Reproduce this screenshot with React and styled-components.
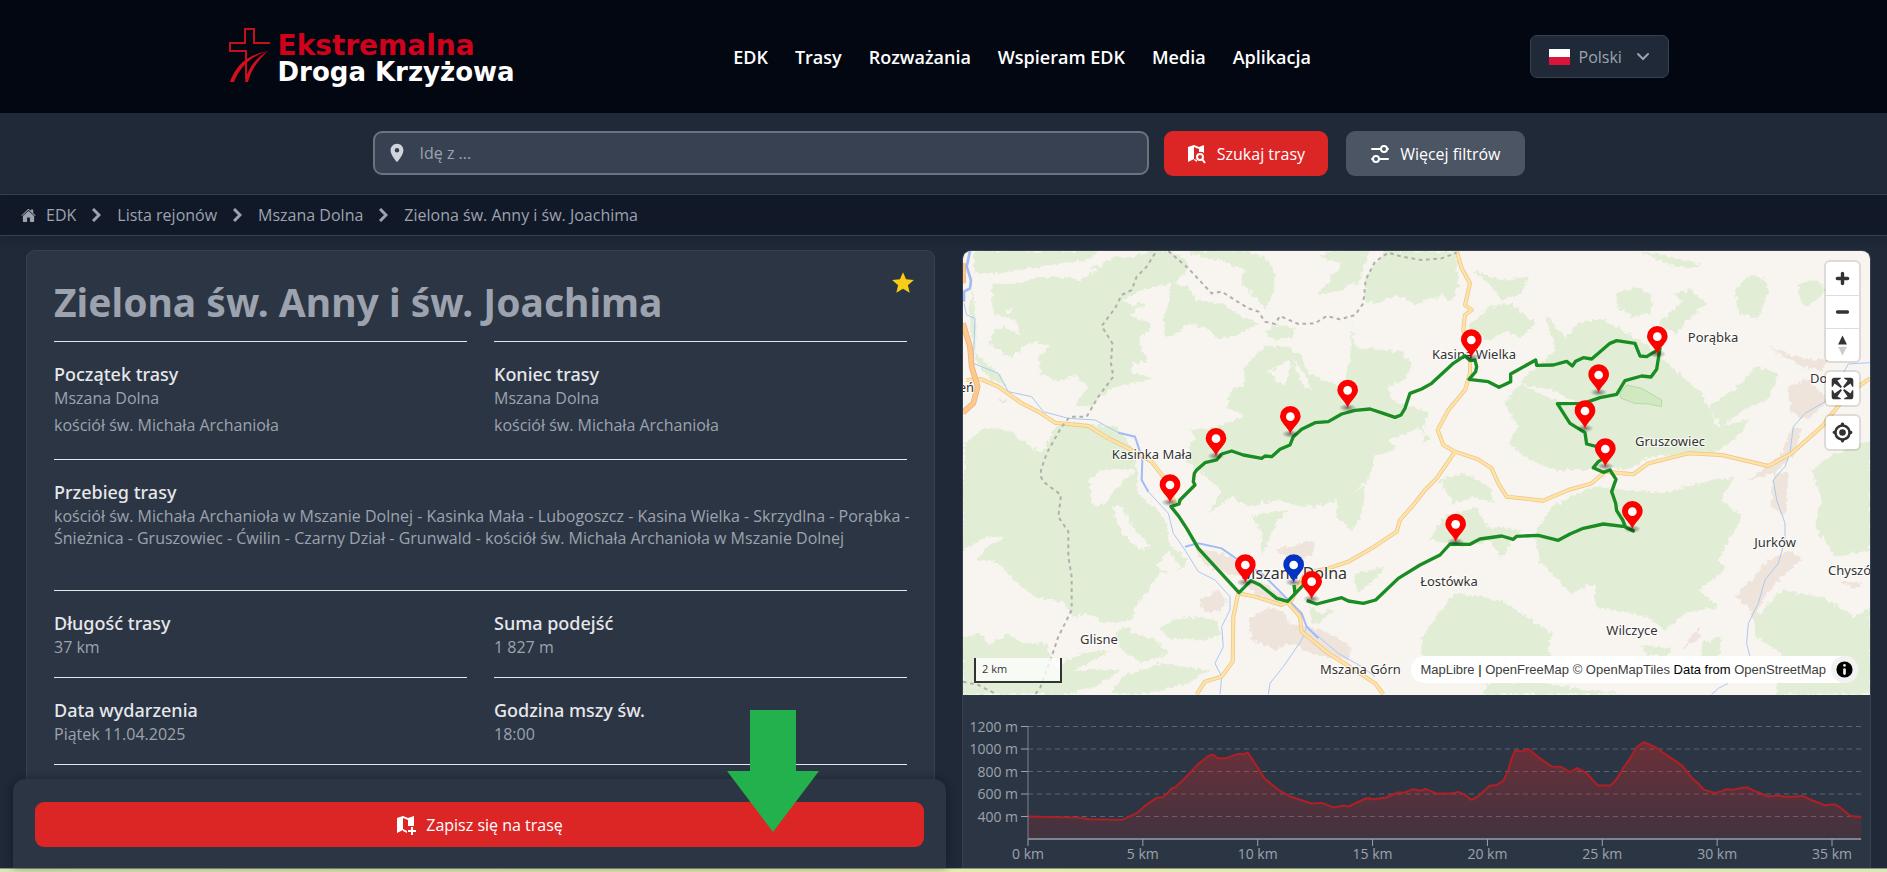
import React from 'react';
import styled, { createGlobalStyle, css } from 'styled-components';
import { MdLocationOn, MdStar } from 'react-icons/md';
import { IoHome } from 'react-icons/io5';

const navLinks = ['EDK', 'Trasy', 'Rozważania', 'Wspieram EDK', 'Media', 'Aplikacja'];

const crumbs = ['EDK', 'Lista rejonów', 'Mszana Dolna', 'Zielona św. Anny i św. Joachima'];

const church = 'kościół św. Michała Archanioła';

const places = [
  { name: 'eń', x: 11, y: 141, anchor: 'end' },
  { name: 'Kasinka Mała', x: 189, y: 208 },
  { name: 'Kasina Wielka', x: 511, y: 108 },
  { name: 'Porąbka', x: 750, y: 91 },
  { name: 'Do', x: 847, y: 132, anchor: 'start' },
  { name: 'Gruszowiec', x: 707, y: 195 },
  { name: 'Mszana Dolna', x: 331, y: 328, town: true },
  { name: 'Glisne', x: 136, y: 393 },
  { name: 'Łostówka', x: 486, y: 335 },
  { name: 'Wilczyce', x: 669, y: 384 },
  { name: 'Jurków', x: 812, y: 296 },
  { name: 'Chyszó', x: 865, y: 324, anchor: 'start' },
  { name: 'Mszana Górn', x: 357, y: 423, anchor: 'start' },
];

// pin tips, in terrain units (3 per pixel)
const pins = [
  [1178, 503],
  [1006, 582],
  [783, 648],
  [1549, 352],
  [2107, 342],
  [1931, 457],
  [1890, 565],
  [1951, 679],
  [645, 787],
  [871, 1027],
  [1016, 1027, '#0433c4'],
  [1070, 1077],
  [1502, 905],
  [2032, 867],
];

const forests = [
  'M55 33H430L400 60 330 68 240 82 160 95 110 100 60 100Z',
  'M112 135L195 130 245 112 345 112 375 125 385 85 440 75 470 55 530 50 590 33H640L700 60 690 100 655 130 600 140 560 150 535 165 500 180 530 195 575 190 520 225 590 250 580 280 550 290 560 330 580 365 530 370 530 400 598 415 530 430 465 445 410 500 360 495 400 440 365 405 310 425 255 400 250 350 285 320 240 305 200 320 165 355 105 310 115 270 150 260 200 290 185 245 125 225 112 200Z',
  'M40 200L55 150 60 230 62 340 120 390 160 440 110 420 66 370Z',
  'M650 130L700 140 720 180 800 190 870 235 910 250 840 290 790 295 760 265 700 250 650 290 630 285 625 230 640 190Z',
  'M690 33H880L940 60 960 110 955 160 930 205 860 130 870 90 790 60 720 45Z',
  'M1090 165L1160 70 1090 50 1130 33H1240L1215 120 1160 150Z',
  'M1230 185L1235 110 1260 70 1290 33H1500L1505 60 1510 140 1490 185 1460 165 1380 195 1330 165 1270 190Z',
  'M930 280L960 255 1020 260 1015 290 960 300Z',
  'M690 660L720 590 700 570 790 560 870 525 815 505 830 450 870 430 865 385 930 320 990 320 1035 340 1060 400 1110 420 1165 440 1185 360 1192 250 1200 320 1340 335 1370 370 1350 420 1300 440 1310 480 1400 510 1410 580 1340 620 1260 650 1240 720 1190 760 1110 795 1040 800 960 780 880 800 830 770 760 820 800 750 730 690Z',
  'M30 610L90 560 170 575 200 600 260 640 300 560 340 545 480 560 520 600 550 700 545 760 600 800 630 840 640 900 660 930 700 960 680 990 610 1000 580 1050 540 1100 530 1140 450 1150 400 1120 350 1130 330 1090 240 1070 200 1040 170 1010 130 970 60 960 100 920 150 890 80 890 30 930Z',
  'M24 700L90 690 200 760 190 850 120 880 24 930Z',
  'M24 1190L80 1180 100 1215 160 1180 200 1210 270 1210 300 1280 380 1240 470 1230 360 1290 500 1290 420 1340 340 1363 24 1363Z',
  'M480 1180L510 1160 540 1180 600 1200 640 1240 560 1270 500 1230Z',
  'M615 1160L680 1130 780 1135 800 1180 760 1200 640 1195Z',
  'M500 1310L620 1270 760 1290 700 1330 560 1363 470 1363Z',
  'M890 830L930 820 1000 810 960 850 945 900 915 950 920 880Z',
  'M1150 770L1230 740 1220 830 1190 870 1145 830Z',
  'M1060 1100L1090 1120 1140 1110 1090 1150 1070 1150Z',
  'M1200 1000L1290 980 1250 1030 1200 1060Z',
  'M1540 260L1600 200 1670 190 1740 250 1700 290 1650 275 1600 300Z',
  'M1545 90L1640 120 1720 110 1700 160 1640 180 1600 130Z',
  'M1700 420L1770 360 1800 330 1770 225 1830 290 1870 250 1940 235 2070 310 2150 380 2240 460 2290 560 2380 540 2340 600 2270 640 2080 650 2020 690 1960 680 1900 690 1800 690 1720 660 1660 610 1690 560 1650 490 1690 440Z',
  'M1395 510L1420 520 1400 580 1430 600 1395 610Z',
  'M1985 160L2050 140 2090 170 2090 220 2030 230 1985 200Z',
  'M2160 160L2210 150 2255 190 2200 240 2160 280 2110 250 2180 190Z',
  'M2340 150L2380 110 2430 115 2440 160 2410 235 2350 220Z',
  'M2050 33L2130 45 2240 75 2200 85 2130 70Z',
  'M2530 130L2590 120 2610 150 2560 200 2530 180Z',
  'M2260 500L2350 440 2400 380 2470 400 2440 480 2380 500 2300 560Z',
  'M2570 690L2640 640 2745 600V930L2640 950 2580 860 2600 780Z',
  'M2400 1130L2480 1050 2600 1070 2700 1130 2745 1100V1363H2460L2480 1240 2400 1190Z',
  'M1790 800L1870 760 1920 740 2020 750 2130 760 2230 730 2340 710 2300 780 2360 830 2290 960 2310 990 2230 1050 2290 1100 2190 1120 2130 1170 2080 1130 1920 1100 1920 1030 1850 1060 1790 1000 1750 960 1740 880Z',
  'M1420 1160L1500 1060 1640 1080 1700 1120 1790 1180 1780 1230 1800 1260H1400V1200Z',
  'M1420 900L1470 830 1560 800 1600 860 1700 870 1640 950 1600 900 1540 920Z',
  'M1450 720L1530 700 1600 740 1620 790 1560 770 1500 790Z',
  'M1600 1330L1740 1325 1900 1350 2020 1363H1580Z',
  'M2060 1215L2150 1225 2130 1250 2080 1245Z',
  'M2240 1210L2300 1190 2290 1260 2240 1260Z',
];

const clearings = [
  'M940 395L1000 362 1012 372 985 440Z',
  'M1010 350L1060 420 1070 455 1040 430Z',
  'M340 100L400 80 430 92 380 112Z',
  'M400 720L440 690 540 690 490 740 440 800 410 790Z',
  'M470 795L500 800 530 860 590 920 560 930 500 880Z',
  'M600 980L640 930 680 980 650 1000Z',
  'M150 210L175 205 160 225Z',
  'M1690 430L1790 450 1890 500 1800 480Z',
  'M1300 600L1400 560 1410 620 1350 650Z',
];

const settlements = [
  'M720 935L780 930 840 960 860 1010 810 1000 750 970Z',
  'M960 930L1080 900 1070 950 1010 960Z',
  'M735 1080L790 1050 815 1080 800 1110 750 1120Z',
  'M880 1140L940 1100 990 1120 1000 1150 1100 1170 1190 1220 1180 1260 1120 1250 1060 1240 1010 1210 960 1230 890 1200Z',
  'M865 1035L900 1015 990 1070 1000 1090 930 1080Z',
  'M2435 320L2540 355 2620 360 2600 390 2540 380Z',
  'M2500 440L2560 420 2620 480 2560 540 2510 520Z',
  'M2510 560L2540 560 2520 640 2460 700 2380 720 2480 640Z',
  'M2455 700L2500 700 2490 830 2450 800Z',
  'M2440 960L2510 930 2540 960 2480 1010 2420 1080 2400 1150 2380 1100 2340 1070Z',
  'M2200 1200L2230 1160 2240 1190 2180 1230Z',
  'M2650 1020L2720 1030 2700 1050Z',
  'M125 480L160 475 150 492Z',
];

const roads = [
  'M35 420L80 418 130 440 200 490 250 515 300 548 400 558 460 595 520 625 590 665 625 710 660 790',
  'M850 1060L900 1070 980 1095 1010 1080 1050 1000 1120 985 1180 965 1250 925 1325 875 1335 840 1375 795 1410 750 1445 715 1500 635',
  'M850 1060L835 1130 833 1265 800 1310 750 1325 725 1363',
  'M1000 1090L1035 1130 1040 1175 1120 1240 1200 1290 1260 1330 1285 1363',
  'M1505 33L1520 85 1545 130 1530 195 1550 210 1530 225 1525 270 1545 330 1545 400 1530 450 1480 510 1448 570 1465 615 1500 635 1570 658 1610 685 1630 730 1655 770 1765 782 1840 750 1910 730 1950 695 2035 703 2080 670 2200 640 2300 645 2440 678 2510 640 2600 560 2680 460 2745 415',
];

const streams = [
  'M27 190L35 225 60 235 55 370 130 400 160 455 230 470 265 515 340 535 420 540 490 578',
  'M580 755L640 820 655 880 690 930 730 995 780 1020 825 1070 825 1110 800 1160 805 1220 780 1270 800 1310 795 1363',
  'M1055 1160L1040 1200 985 1280 945 1330 940 1363M1055 1160L1150 1240 1220 1280 1260 1310',
  'M2745 368L2680 372 2620 480 2550 520 2515 560 2505 640 2490 680 2455 720 2465 780 2490 850 2490 900 2470 970 2430 1020 2410 1090 2380 1150 2375 1210 2385 1250',
  'M2320 1330L2290 1345 2270 1363',
];

const rivers = [
  'M490 578L540 590 550 620 562 660 560 720 580 755',
  'M690 920L730 910 800 925 850 960 920 1000 990 1070 1040 1120 1055 1160 1090 1195',
];

const borders =
  'M600 40L575 80 545 110 530 150 500 165 480 205 440 258 472 310 468 370 475 410 430 470 395 530 345 530 320 560 275 640 258 690 258 710 265 725 318 765 310 830 340 875 340 950 350 1010 350 1110 310 1190 290 1250 255 1345 240 1363M24 1325L70 1335 125 1363M640 33L700 85 770 160 800 155 880 205 910 215 930 245 960 252 975 228 1030 252 1080 250 1115 228 1155 238 1200 225 1225 190 1232 120 1260 65 1300 38 1340 50 1400 60 1460 55 1505 38';

const route =
  'M1017 1035L1020 1060M1050 1030L998 1084 965 1075 915 1035 888 1022 852 1058 730 925 695 865 672 830 648 800 672 792 675 780 720 735 715 725 718 700 725 690 750 668 785 660 800 642 830 633 865 645 920 655 930 648 950 650 975 628 1005 615 1015 590 1040 568 1080 548 1120 545 1160 522 1200 511 1245 507 1285 520 1320 532 1338 525 1350 505 1365 460 1400 447 1430 430 1495 370 1530 347 1545 362 1560 360 1565 380 1562 395 1542 418 1600 425 1632 442 1667 425 1667 402 1742 360 1745 376 1795 375 1835 364 1852 378 1862 364 1885 353 1910 357 1965 310 1985 302 2040 310 2055 348 2075 350 2115 325 2105 388 2088 411 2060 408 2010 422 1985 463 1935 473 1885 490 1807 491 1845 550 1890 578 1895 612 1935 622 1955 650 1930 665 1915 683 1945 697 1965 690 1983 718 1970 755 1982 790 1985 812 2003 840 2012 862 2035 873 2010 860 1945 852 1885 865 1845 882 1810 901 1750 886 1685 889 1675 898 1640 888 1575 897 1545 913 1485 912 1455 945 1395 975 1330 1015 1262 1080 1225 1090 1180 1083 1160 1073 1085 1092 1055 1082';

// [km, metres above sea level]
const profile = [
  [0, 399], [2.25, 390], [2.64, 375], [4.1, 370], [4.76, 432], [5.1, 497], [5.6, 566], [5.88, 572],
  [6.3, 655], [6.4, 657], [6.9, 756], [7.4, 866], [7.87, 940], [8.05, 950], [8.26, 917], [8.6, 917],
  [9.1, 955], [9.4, 955], [9.56, 970], [9.97, 845], [10.28, 741], [10.9, 637], [11.44, 575],
  [12.35, 515], [12.8, 521], [13.3, 480], [13.75, 497], [13.96, 489], [14.7, 560], [14.9, 563],
  [15, 551], [15.6, 569], [16.1, 613], [16.4, 613], [16.75, 643], [17.1, 628], [17.3, 646],
  [17.8, 604], [18.4, 604], [18.75, 619], [19, 595], [19.3, 548], [19.6, 580], [20.1, 673],
  [20.4, 679], [20.7, 720], [20.9, 810], [21.05, 914], [21.2, 985], [21.5, 979], [21.8, 1000],
  [22.3, 914], [22.8, 845], [23.2, 842], [23.6, 795], [23.9, 830], [24.3, 789], [24.8, 676],
  [25.35, 676], [25.6, 726], [25.95, 842], [26.2, 914], [26.5, 1018], [26.8, 1062], [27.3, 1018],
  [27.8, 946], [28.2, 893], [28.5, 848], [28.9, 741], [29.2, 690], [29.4, 640], [29.9, 610],
  [30.2, 625], [30.4, 643], [30.7, 637], [31, 652], [31.3, 661], [31.6, 628], [31.8, 616],
  [32.2, 578], [32.7, 587], [32.9, 575], [33.4, 575], [33.7, 584], [34.15, 542], [34.7, 500],
  [35.1, 509], [35.4, 474], [35.8, 405], [36.27, 396],
];

const kmToX = (km) => 65 + (km * 804) / 35;
const metresToY = (m) => 144 - ((m - 200) * 45) / 400;

const Logo = () => (
  <LogoLink href='#'>
    <svg width='42' height='54' viewBox='0 1 42 54' fill='none' aria-hidden='true'>
      <path d='M17 52V24H1V16H16V2H25V16H41' stroke='#c4101c' strokeWidth='2' />
      <path d='M1 55C7 38 18 28 39 24C22 29 11 40 5 55Z' fill='#d40f1c' />
      <path d='M16 55C18 43 26 31 39 24C29 33 22 43 19 55Z' fill='#d40f1c' />
    </svg>
    <LogoText>
      <LogoTop>Ekstremalna</LogoTop>
      <LogoBottom>Droga Krzyżowa</LogoBottom>
    </LogoText>
  </LogoLink>
);

const MapSearchIcon = () => (
  <svg width='20' height='20' viewBox='0 0 20 20' fill='none' aria-hidden='true'>
    <path d='M1 3L7 1V15L1 18Z' fill='currentColor' />
    <path d='M7 1L12 3L17 1V9A6 6 0 0 0 12 8V5L7 3Z' fill='currentColor' />
    <circle cx='13' cy='13' r='3' stroke='currentColor' strokeWidth='2' />
    <path d='M15 15L18 19' stroke='currentColor' strokeWidth='2' />
    <path d='M7 15L10 16V18L7 16Z' fill='currentColor' />
  </svg>
);

const MapPlusIcon = () => (
  <svg width='20' height='20' viewBox='0 0 20 20' fill='none' aria-hidden='true'>
    <path d='M1 3L7 1V15L1 18Z' fill='currentColor' />
    <path d='M7 1L12 3L18 1V11H12V5L7 3Z' fill='currentColor' />
    <path d='M7 14L11 16V18L7 16Z' fill='currentColor' />
    <path d='M16 12V20M12 16H20' stroke='currentColor' strokeWidth='2' />
  </svg>
);

const FiltersIcon = () => (
  <svg width='20' height='20' viewBox='0 0 20 20' fill='none' stroke='currentColor' strokeWidth='2' strokeLinecap='round' aria-hidden='true'>
    <path d='M2 5H10M17 5H18M2 15H3M10 15H18' />
    <circle cx='14' cy='5' r='3' />
    <circle cx='6' cy='15' r='3' />
  </svg>
);

const Chevron = () => (
  <svg width='9' height='14' viewBox='1 0 9 14' fill='none' aria-hidden='true'>
    <path d='M2 1L8 7L2 13' stroke='currentColor' strokeWidth='3' />
  </svg>
);

const RouteMap = () => (
  <MapBox>
    <svg viewBox='0 0 907 444' preserveAspectRatio='xMidYMid slice' role='img' aria-label='Mapa trasy'>
      <defs>
        <filter id='ragged' x='0' y='0' width='100%' height='100%'>
          <feTurbulence type='fractalNoise' baseFrequency='0.07' numOctaves='3' seed='4' />
          <feDisplacementMap in='SourceGraphic' scale='22' xChannelSelector='R' yChannelSelector='G' />
        </filter>
        <radialGradient id='shade'>
          <stop offset='0' stopOpacity='0.5' />
          <stop offset='1' stopOpacity='0' />
        </radialGradient>
      </defs>
      <rect width='907' height='444' fill='#f8f4f0' />
      <g transform='translate(-8 -11) scale(0.33333)' fill='none'>
        <g filter='url(#ragged)'>
          <path d={forests.join('')} fill='#e1eed5' />
          <path d={clearings.join('')} fill='#f8f4f0' />
          <path d={settlements.join('')} fill='#efe4dc' />
        </g>
        <path d='M1995 460L2015 435 2060 445 2120 480 2120 500 2080 492 2040 490 1998 475Z' fill='#d0e9c0' stroke='#a3cf96' strokeWidth='2' />
        <path d={streams.join('')} stroke='#a9c8f2' strokeWidth='3' />
        <path d={rivers.join('')} stroke='#a0bbf7' strokeWidth='6' />
        <path d='M45 33L35 80 48 120 45 145 27 155V185' stroke='#a0bbf7' strokeWidth='8' />
        <path d={roads.join('')} stroke='#ecc08a' strokeWidth='12' strokeLinejoin='round' />
        <path d={roads.join('')} stroke='#fee4a3' strokeWidth='8' strokeLinejoin='round' />
        <path d='M24 70V130M24 250L45 320 50 380 68 440 55 490 24 518' stroke='#e9ac77' strokeWidth='17' />
        <path d='M24 70V130M24 250L45 320 50 380 68 440 55 490 24 518' stroke='#fdc88b' strokeWidth='13' />
        <path d={borders} stroke='#b0b0ac' strokeWidth='6' strokeDasharray='11 11' />
      </g>
      {places.map((p) => (
        <PlaceName key={p.name} x={p.x} y={p.y} textAnchor={p.anchor || 'middle'} $town={p.town}>
          {p.name}
        </PlaceName>
      ))}
      <g transform='translate(-8 -11) scale(0.33333)'>
        <path d={route} fill='none' stroke='#198c23' strokeWidth='10' strokeLinejoin='round' />
        {pins.map(([x, y, color]) => (
          <g key={`${x}-${y}`} transform={`translate(${x} ${y})`}>
            <ellipse rx='26' ry='12' fill='url(#shade)' />
            <path d='M0 0C-7 -20 -31 -34 -31 -53A31 31 0 0 1 31 -53C31 -34 7 -20 0 0Z' fill={color || '#fe0000'} />
            <circle cy='-52' r='13' fill='#fff' />
          </g>
        ))}
      </g>
    </svg>
    <MapControls>
      <ControlGroup>
        <ControlButton type='button' aria-label='Przybliż'>
          <svg viewBox='0 0 29 29'>
            <path d='M14.5 8.5c-.75 0-1.5.75-1.5 1.5v3h-3c-.75 0-1.5.75-1.5 1.5S9.25 16 10 16h3v3c0 .75.75 1.5 1.5 1.5S16 19.75 16 19v-3h3c.75 0 1.5-.75 1.5-1.5S19.75 13 19 13h-3v-3c0-.75-.75-1.5-1.5-1.5z' />
          </svg>
        </ControlButton>
        <ControlButton type='button' aria-label='Oddal'>
          <svg viewBox='0 0 29 29'>
            <path d='M10 13c-.75 0-1.5.75-1.5 1.5S9.25 16 10 16h9c.75 0 1.5-.75 1.5-1.5S19.75 13 19 13h-9z' />
          </svg>
        </ControlButton>
        <ControlButton type='button' aria-label='Północ'>
          <svg viewBox='0 0 29 29'>
            <path d='M10.5 14l4-8 4 8h-8z' />
            <path d='M10.5 16l4 8 4-8h-8z' fill='#ccc' />
          </svg>
        </ControlButton>
      </ControlGroup>
      <ControlGroup>
        <ControlButton type='button' aria-label='Pełny ekran'>
          <svg viewBox='0 0 29 29'>
            <path d='M24 16v5.5c0 1.75-.75 2.5-2.5 2.5H16v-1l3-1.5-4-5.5 1-1 5.5 4 1.5-3h1zM6 16l1.5 3 5.5-4 1 1-4 5.5 3 1.5v1H7.5C5.75 24 5 23.25 5 21.5V16h1zm7-11v1l-3 1.5 4 5.5-1 1-5.5-4L6 13H5V7.5C5 5.75 5.75 5 7.5 5H13zm11 2.5c0-1.75-.75-2.5-2.5-2.5H16v1l3 1.5-4 5.5 1 1 5.5-4 1.5 3h1V7.5z' />
          </svg>
        </ControlButton>
      </ControlGroup>
      <ControlGroup>
        <ControlButton type='button' aria-label='Moja lokalizacja'>
          <svg viewBox='0 0 20 20'>
            <path d='M10 4C9 4 9 5 9 5v.1A5 5 0 0 0 5.1 9H5s-1 0-1 1 1 1 1 1h.1A5 5 0 0 0 9 14.9v.1s0 1 1 1 1-1 1-1v-.1a5 5 0 0 0 3.9-3.9h.1s1 0 1-1-1-1-1-1h-.1A5 5 0 0 0 11 5.1V5s0-1-1-1zm0 2.5a3.5 3.5 0 1 1 0 7 3.5 3.5 0 1 1 0-7z' />
            <circle cx='10' cy='10' r='2' />
          </svg>
        </ControlButton>
      </ControlGroup>
    </MapControls>
    <Scale>2 km</Scale>
    <Attribution>
      <span>
        <a href='#'>MapLibre</a> | <a href='#'>OpenFreeMap</a> <a href='#'>© OpenMapTiles</a> Data from{' '}
        <a href='#'>OpenStreetMap</a>
      </span>
      <InfoButton type='button' aria-label='Informacje o mapie'>
        <svg width='27' height='27' viewBox='0 0 20 20' fillRule='evenodd'>
          <path d='M4 10a6 6 0 1 0 12 0 6 6 0 1 0-12 0m5-3a1 1 0 1 0 2 0 1 1 0 1 0-2 0m0 3a1 1 0 1 1 2 0v3a1 1 0 1 1-2 0' />
        </svg>
      </InfoButton>
    </Attribution>
  </MapBox>
);

const ElevationChart = () => {
  const line = profile.map(([km, m]) => `${kmToX(km)},${metresToY(m)}`).join(' ');
  const right = kmToX(36.27);
  return (
    <ChartSvg viewBox='0 0 907 180' role='img' aria-label='Profil wysokości'>
      <defs>
        <linearGradient id='fade' x1='0' y1='0' x2='0' y2='1'>
          <stop offset='0' stopColor='#dc2626' stopOpacity='0.36' />
          <stop offset='1' stopColor='#dc2626' stopOpacity='0.12' />
        </linearGradient>
      </defs>
      {[400, 600, 800, 1000, 1200].map((m) => (
        <g key={m}>
          <path d={`M65 ${metresToY(m)}H${right}`} stroke='#5b6472' strokeDasharray='5 4' />
          <path d={`M58 ${metresToY(m)}H65`} stroke='#9ca3af' />
          <text x='55' y={metresToY(m) + 5} textAnchor='end'>{`${m} m`}</text>
        </g>
      ))}
      <polygon points={`65,144 ${line} ${right},144`} fill='url(#fade)' />
      <polyline points={line} fill='none' stroke='#b01f24' strokeWidth='2' strokeLinejoin='round' />
      <path d='M65 31V144' stroke='#7c8491' />
      <path d={`M65 144H${right}`} stroke='#7c8491' strokeWidth='2' />
      {[0, 5, 10, 15, 20, 25, 30, 35].map((km) => (
        <g key={km}>
          <path d={`M${kmToX(km)} 144V151`} stroke='#9ca3af' />
          <text x={kmToX(km)} y='164' textAnchor='middle'>{`${km} km`}</text>
        </g>
      ))}
    </ChartSvg>
  );
};

const App = () => {
  return (
    <Page>
      <GlobalStyle />
      <Header>
        <HeaderInner>
          <Logo />
          <Nav>
            {navLinks.map((link) => (
              <a href='#' key={link}>
                {link}
              </a>
            ))}
          </Nav>
          <Language>
            <Flag />
            <select aria-label='Język' defaultValue='pl'>
              <option value='pl'>Polski</option>
            </select>
            <svg width='14' height='14' viewBox='0 0 14 14' fill='none' aria-hidden='true'>
              <path d='M2 4L7 9L12 4' stroke='currentColor' strokeWidth='2' strokeLinecap='round' />
            </svg>
          </Language>
        </HeaderInner>
      </Header>

      <SearchBar>
        <SearchForm onSubmit={(e) => e.preventDefault()}>
          <SearchField>
            <MdLocationOn size={22} />
            <input type='text' placeholder='Idę z ...' aria-label='Idę z' />
          </SearchField>
          <Button type='submit' $color='#dc2626'>
            <MapSearchIcon />
            Szukaj trasy
          </Button>
          <FilterButton type='button' $color='#4b5563'>
            <FiltersIcon />
            Więcej filtrów
          </FilterButton>
        </SearchForm>
      </SearchBar>

      <Breadcrumb>
        <IoHome size={15} />
        {crumbs.map((crumb, i) => (
          <React.Fragment key={crumb}>
            {i > 0 && <Chevron />}
            <a href='#'>{crumb}</a>
          </React.Fragment>
        ))}
      </Breadcrumb>

      <Main>
        <Column>
          <Card>
            <Favourite type='button' aria-label='Ulubiona'>
              <MdStar size={26} />
            </Favourite>
            <h1>Zielona św. Anny i św. Joachima</h1>
            <Fields>
              <Field>
                <dt>Początek trasy</dt>
                <dd>Mszana Dolna</dd>
                <Church>{church}</Church>
              </Field>
              <Field>
                <dt>Koniec trasy</dt>
                <dd>Mszana Dolna</dd>
                <Church>{church}</Church>
              </Field>
            </Fields>
            <Fields $joined>
              <Course>
                <dt>Przebieg trasy</dt>
                <dd>
                  kościół św. Michała Archanioła w Mszanie Dolnej - Kasinka Mała - Lubogoszcz - Kasina Wielka -
                  Skrzydlna - Porąbka - Śnieżnica - Gruszowiec - Ćwilin - Czarny Dział - Grunwald - kościół św. Michała
                  Archanioła w Mszanie Dolnej
                </dd>
              </Course>
            </Fields>
            <Fields $joined>
              <Field>
                <dt>Długość trasy</dt>
                <dd>37 km</dd>
              </Field>
              <Field>
                <dt>Suma podejść</dt>
                <dd>1 827 m</dd>
              </Field>
            </Fields>
            <Fields>
              <Field>
                <dt>Data wydarzenia</dt>
                <dd>Piątek 11.04.2025</dd>
              </Field>
              <Field>
                <dt>Godzina mszy św.</dt>
                <dd>18:00</dd>
              </Field>
            </Fields>
            <Fields $joined />
          </Card>
          <ActionBar>
            <Button type='button' $color='#dc2626'>
              <MapPlusIcon />
              Zapisz się na trasę
            </Button>
            <Arrow viewBox='0 0 92 122' aria-hidden='true'>
              <path d='M23 0H69V61H92L46 122L0 61H23Z' fill='#22b14c' />
            </Arrow>
          </ActionBar>
        </Column>
        <MapCard>
          <RouteMap />
          <ElevationChart />
        </MapCard>
      </Main>
      <BottomStrip />
    </Page>
  );
};

export default App;

const GlobalStyle = createGlobalStyle`
  *, *::before, *::after {
    box-sizing: border-box;
  }
  body {
    margin: 0;
    background: #1f2937;
    color: #9ca3af;
    font-family: 'Open Sans', 'Noto Sans', sans-serif;
    font-size: 16px;
    line-height: 22px;
  }
  a {
    color: inherit;
    text-decoration: none;
  }
  button, input, select {
    font: inherit;
  }
  h1, dl, dd {
    margin: 0;
  }
  h1, dt {
    font-family: 'Noto Sans', 'Open Sans', sans-serif;
  }
  svg {
    flex-shrink: 0;
  }
`;

const Page = styled.div`
  display: flex;
  flex-direction: column;
  height: 100vh;
  overflow: hidden;
`;

const Header = styled.header`
  padding: 0 0 0 10px;
  background: #030712;
`;

const HeaderInner = styled.div`
  display: flex;
  align-items: center;
  justify-content: space-between;
  max-width: 1440px;
  height: 113px;
  margin: 0 auto;
`;

const LogoLink = styled.a`
  display: flex;
  align-items: flex-start;
  gap: 7px;
`;

const LogoText = styled.span`
  display: flex;
  flex-direction: column;
  padding-top: 5px;
  font-family: 'DejaVu Sans', sans-serif;
  font-weight: bold;
  line-height: 26px;
`;

const LogoTop = styled.span`
  color: #d0021b;
  font-size: 28px;
`;

const LogoBottom = styled.span`
  color: #fff;
  font-size: 26px;
`;

const Nav = styled.nav`
  display: flex;
  gap: 27px;
  color: #fff;
  font-size: 18px;
  font-weight: 600;
`;

const Language = styled.label`
  display: flex;
  align-items: center;
  gap: 9px;
  height: 43px;
  padding: 0 18px;
  border: 1px solid #374151;
  border-radius: 7px;
  background: #1f2937;

  select {
    width: 48px;
    padding: 0;
    border: 0;
    appearance: none;
    background: transparent;
    color: #9ca3af;
  }
`;

const Flag = styled.span`
  width: 21px;
  height: 16px;
  background: linear-gradient(#fff 50%, #dc143c 50%);
`;

const SearchBar = styled.div`
  padding: 18px 0 18px 10px;
  border-bottom: 1px solid #374151;
`;

const SearchForm = styled.form`
  display: flex;
  max-width: 1152px;
  margin: 0 auto;
`;

const SearchField = styled.label`
  display: flex;
  flex: 1;
  align-items: center;
  gap: 12px;
  height: 44px;
  margin-right: 15px;
  padding: 0 11px;
  border: 2px solid #6b7280;
  border-radius: 9px;
  background: #374151;
  color: #d1d5db;

  input {
    flex: 1;
    padding: 0;
    border: 0;
    outline: 0;
    background: transparent;
    color: #fff;
  }
  input::placeholder {
    color: #9ca3af;
  }
`;

const Button = styled.button`
  display: flex;
  align-items: center;
  justify-content: center;
  gap: 10px;
  height: 45px;
  padding: 0 23px;
  border: 0;
  border-radius: 9px;
  background: ${(props) => props.$color};
  color: #fff;
  font-weight: 500;
  cursor: pointer;
`;

const FilterButton = styled(Button)`
  margin-left: 18px;
  padding: 0 24px;
`;

const Breadcrumb = styled.nav`
  display: flex;
  align-items: center;
  gap: 16px;
  height: 41px;
  padding: 0 21px;
  border-bottom: 1px solid #374151;
  background: #111827;
  box-shadow: 0 4px 8px rgba(0, 0, 0, 0.15);

  > svg:first-child {
    margin-right: -6px;
  }
`;

const Main = styled.main`
  display: grid;
  flex: 1;
  grid-template-columns: 1fr 1fr;
  gap: 27px;
  min-height: 0;
  padding: 14px 16px 0 26px;
`;

const Column = styled.div`
  display: flex;
  flex-direction: column;
  min-height: 0;
`;

const Card = styled.section`
  position: relative;
  flex: 1;
  padding: 28px 27px 0;
  border: 1px solid #374151;
  border-bottom: 0;
  border-radius: 9px 9px 0 0;
  background: #2c3543;

  h1 {
    margin-bottom: 17px;
    font-size: 39px;
    font-weight: bold;
    line-height: 45px;
  }
`;

const Favourite = styled.button`
  position: absolute;
  top: 19px;
  right: 18px;
  display: flex;
  padding: 0;
  border: 0;
  background: none;
  color: #facc15;
`;

const Field = styled.div`
  padding: 19px 0;

  dt {
    color: #e5e7eb;
    font-size: 18px;
    font-weight: 500;
    line-height: 26px;
  }
`;

const Course = styled(Field)`
  grid-column: 1 / -1;

  dd {
    margin: 0 -5px 22px 0;
  }
`;

const Church = styled.dd`
  && {
    margin: 5px 0 4px;
  }
`;

const line = css`
  border-top: 1px solid #e5e7eb;
`;

const Fields = styled.dl`
  display: grid;
  grid-template-columns: 1fr 1fr;
  column-gap: 27px;
  ${(props) => props.$joined && line}

  ${Field} {
    ${(props) => !props.$joined && line}
  }
`;

const ActionBar = styled.div`
  position: relative;
  margin: 0 -11px 0 -13px;
  padding: 23px 22px 21px;
  border-radius: 12px 12px 0 0;
  background: #2c3543;
  box-shadow: 0 0 10px rgba(0, 0, 0, 0.35);

  ${Button} {
    width: 100%;
  }
`;

const Arrow = styled.svg`
  position: absolute;
  right: 127px;
  bottom: 36px;
  width: 92px;
  height: 122px;
`;

const MapCard = styled.section`
  overflow: hidden;
  border: 1px solid #374151;
  border-bottom: 0;
  border-radius: 9px 9px 0 0;
  background: #2c3543;
`;

const MapBox = styled.div`
  position: relative;
  height: 444px;
  overflow: hidden;

  > svg {
    display: block;
    width: 100%;
    height: 100%;
  }
`;

const PlaceName = styled.text`
  fill: #333;
  font-family: 'Noto Sans', sans-serif;
  font-size: ${(props) => (props.$town ? 16 : 13)}px;
  paint-order: stroke;
  stroke: rgba(255, 255, 255, 0.8);
  stroke-width: 2px;
`;

const MapControls = styled.div`
  position: absolute;
  top: 11px;
  right: 11px;
  display: flex;
  flex-direction: column;
  gap: 11px;
`;

const ControlGroup = styled.div`
  overflow: hidden;
  border-radius: 4px;
  background: #fff;
  box-shadow: 0 0 0 2px rgba(0, 0, 0, 0.1);
`;

const ControlButton = styled.button`
  display: block;
  width: 33px;
  height: 33px;
  padding: 0;
  border: 0;
  background: none;
  cursor: pointer;

  & + & {
    border-top: 1px solid #ddd;
  }
  svg {
    display: block;
    width: 100%;
    height: 100%;
    fill: #333;
  }
`;

const Scale = styled.div`
  position: absolute;
  bottom: 12px;
  left: 11px;
  width: 88px;
  height: 25px;
  padding: 0 6px;
  border: 2px solid #333;
  border-top: 0;
  background: rgba(255, 255, 255, 0.75);
  color: #333;
  font-size: 11px;
`;

const Attribution = styled.div`
  position: absolute;
  right: 12px;
  bottom: 12px;
  display: flex;
  align-items: center;
  gap: 5px;
  height: 27px;
  padding-left: 9px;
  border-radius: 14px;
  background: #fff;
  color: #000;
  font-family: 'Liberation Sans', Arial, sans-serif;
  font-size: 13px;

  a {
    color: #404040;
  }
`;

const InfoButton = styled.button`
  display: flex;
  padding: 0;
  border: 0;
  border-radius: 14px;
  background: #f2f2f2;
`;

const ChartSvg = styled.svg`
  display: block;
  width: 100%;

  text {
    fill: #9ca3af;
    font-size: 14px;
  }
`;

const BottomStrip = styled.div`
  height: 4px;
  border-top: 1px solid #8b9389;
  background: linear-gradient(90deg, #d9e8b4, #e6ebaa 50%, #d9e8b4);
`;
